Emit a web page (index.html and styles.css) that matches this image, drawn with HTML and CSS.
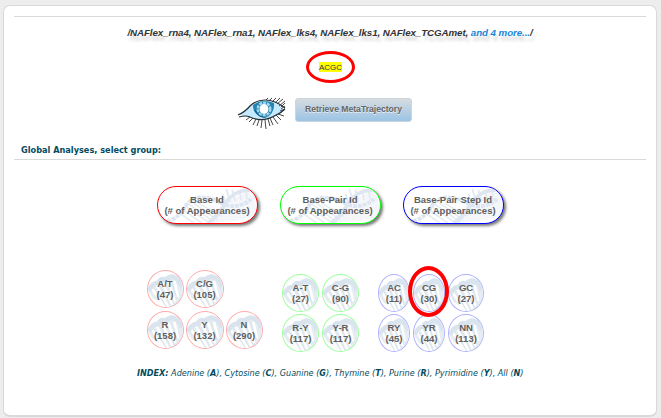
FILE: index.html
```html
<!DOCTYPE html>
<html lang="en">
<head>
<meta charset="utf-8">
<title>NAFlex Global Analyses</title>
<link rel="stylesheet" href="styles.css">
</head>
<body>
<svg class="defs" width="0" height="0" aria-hidden="true">
  <symbol id="helix-wide" viewBox="0 0 100 38" preserveAspectRatio="none">
    <path d="M47 38 C62 28 67 12 97 3 L100 30 Q75 38 47 38" fill="#f0f3f8"/>
    <path d="M27 20L52 38M31 18L57 37M36 17L60 35M41 17L64 31M24 23L44 38M21 27L36 38" stroke="#dce4e9" stroke-width="1.7"/>
    <path d="M69 2L73 16M75 3L78 15M82 3L84 14M89 4L90 13M65 7L68 17" stroke="#d9e3ee" stroke-width="2"/>
    <path d="M9 36Q21 33 26 23Q32 12 42 11Q54 11 64 17Q79 25 94 13" fill="none" stroke="#cddaea" stroke-width="4" stroke-dasharray="4 1"/>
    <path d="M51 38Q61 30 67 19Q76 3 94 3" fill="none" stroke="#d0dcec" stroke-width="4"/>
  </symbol>
  <symbol id="helix-round" viewBox="0 0 36 37" preserveAspectRatio="none">
    <path d="M21 36Q31 30 35 15L36 36Z" fill="#ccd8ed"/>
    <path d="M0 20Q5 8 14 10Q23 3 36 7L36 30L22 37L5 28Z" fill="#e6edf2"/>
    <path d="M4 18L17 37M9 15L21 37M15 12L25 35M21 11L28 32M27 10L31 27" stroke="#fff" stroke-width="2.6"/>
    <path d="M6 17L19 37M12 14L23 36M18 11L27 34M24 10L30 29" stroke="#dde6ea" stroke-width="1.2"/>
    <path d="M1 20Q5 12 11 12Q13 7 18 9Q24 4 28 7Q32 8 35 16" fill="none" stroke="#d9e4ee" stroke-width="5"/>
  </symbol>
</svg>
<main class="panel">
  <h1 class="sets"><span>/NAFlex_rna4, NAFlex_rna1, NAFlex_lks4, NAFlex_lks1, NAFlex_TCGAmet, <a>and 4 more...</a>/</span></h1>
  <div class="sequence"><div class="marker"><mark>ACGC</mark></div></div>
  <div class="retrieve">
    <svg class="eye" viewBox="0 0 48 34" aria-hidden="true">
      <path d="M1 17C11 12 15 4 27 4Q39 4 47 13Q38 21 27 23Q18 23 12 20Q7 21 1 17" fill="#c5eaff"/>
      <path d="M15 8Q24 1 36 6Q37 17 27 21Q15 19 15 8" fill="#2583b4"/>
      <path d="M17 13Q20 20 27 20" fill="none" stroke="#125b83" stroke-width="1.3"/>
      <circle cx="26" cy="12" r="6.3" fill="none" stroke="#a5d8ed" stroke-width="2.4" stroke-dasharray="3 1"/>
      <ellipse cx="26" cy="12" rx="4.5" ry="5" fill="#fff"/>
      <path d="M0 18Q7 15 12 9Q18 3 27 3Q37 3 47 11M1 20Q8 18 12 20Q25 26 38 18Q43 16 47 12" fill="none" stroke="#263035" stroke-width="1.2"/>
      <path d="M28 3L30 1M31 4L34 1M34 5L38 1M37 6L42 1M39 7L45 2M41 9L47 4M43 10L47 6M43 12L47 9M42 14L47 12M12 20L8 23M15 21L11 25M18 22L15 28M21 23L19 29M24 23L23 31M27 23L28 32M30 22L32 29M32 21L35 28M35 20L40 27M38 18L43 23M40 17L46 19" stroke="#333" stroke-width=".9"/>
    </svg>
    <button type="button">Retrieve MetaTrajectory</button>
  </div>
  <h2 class="heading"><span>Global Analyses, select group:</span></h2>
  <div class="legend">
    <div class="pill red"><svg><use href="#helix-wide"/></svg><span>Base Id<br>(# of Appearances)</span></div>
    <div class="pill green"><svg><use href="#helix-wide"/></svg><span>Base-Pair Id<br>(# of Appearances)</span></div>
    <div class="pill blue"><svg><use href="#helix-wide"/></svg><span>Base-Pair Step Id<br>(# of Appearances)</span></div>
  </div>
  <div class="groups">
    <section class="group bases">
      <div class="node"><svg><use href="#helix-round"/></svg><span>A/T<br>(47)</span></div>
      <div class="node"><svg><use href="#helix-round"/></svg><span>C/G<br>(105)</span></div>
      <div class="node first"><svg><use href="#helix-round"/></svg><span>R<br>(158)</span></div>
      <div class="node"><svg><use href="#helix-round"/></svg><span>Y<br>(132)</span></div>
      <div class="node"><svg><use href="#helix-round"/></svg><span>N<br>(290)</span></div>
    </section>
    <section class="group pairs">
      <div class="node"><svg><use href="#helix-round"/></svg><span>A-T<br>(27)</span></div>
      <div class="node"><svg><use href="#helix-round"/></svg><span>C-G<br>(90)</span></div>
      <div class="node"><svg><use href="#helix-round"/></svg><span>R-Y<br>(117)</span></div>
      <div class="node"><svg><use href="#helix-round"/></svg><span>Y-R<br>(117)</span></div>
    </section>
    <section class="group steps">
      <div class="node"><svg><use href="#helix-round"/></svg><span>AC<br>(11)</span></div>
      <div class="node selected"><svg><use href="#helix-round"/></svg><span>CG<br>(30)</span></div>
      <div class="node"><svg><use href="#helix-round"/></svg><span>GC<br>(27)</span></div>
      <div class="node"><svg><use href="#helix-round"/></svg><span>RY<br>(45)</span></div>
      <div class="node"><svg><use href="#helix-round"/></svg><span>YR<br>(44)</span></div>
      <div class="node"><svg><use href="#helix-round"/></svg><span>NN<br>(113)</span></div>
    </section>
  </div>
  <p class="index"><b>INDEX:</b> Adenine (<b>A</b>), Cytosine (<b>C</b>), Guanine (<b>G</b>), Thymine (<b>T</b>), Purine (<b>R</b>), Pyrimidine (<b>Y</b>), All (<b>N</b>)</p>
</main>
</body>
</html>
```
FILE: styles.css
```css
*, *::before, *::after { box-sizing: border-box; }
body {
  margin: 0;
  height: 418px;
  padding: 5px 4px 1px 3px;
  overflow: hidden;
  background: #ededed;
  font-family: "Liberation Sans", Arial, sans-serif;
}
.defs { position: absolute; }
.panel {
  height: 412px;
  padding: 10px 10px 0;
  background: #fff;
  border: 1px solid #d9d9d9;
  border-bottom-width: 2px;
  border-radius: 7px;
}
.sets {
  height: 35px;
  margin: 0;
  padding-top: 9px;
  border-top: 1px solid #d9d9d9;
  font-size: 9.75px;
  letter-spacing: -.08px;
  line-height: 13px;
  font-style: italic;
  text-align: center;
  white-space: nowrap;
  color: #333;
  text-shadow: 2px 5px 3px rgba(0, 0, 0, .16);
}
.sets a { color: #1685d9; }
.sequence { display: flex; height: 47px; }
.marker {
  width: 49px;
  height: 32px;
  margin-left: 292px;
  display: flex;
  align-items: center;
  justify-content: center;
  border: 3px solid #f00;
  border-radius: 50%;
}
mark { height: 10px; background: #ff0; color: #333; font-size: 8px; line-height: 11px; }
.retrieve { display: flex; height: 45px; padding-left: 224px; }
.eye { width: 48px; height: 34px; margin-right: 9px; margin-top: -1px; }
button {
  width: 117px;
  height: 24px;
  padding: 0 0 2px;
  border: 1px solid #c9d5df;
  border-radius: 3px;
  background: linear-gradient(#d6dbdf, #9bc4e5);
  color: #666;
  font: bold 8.6px/12px "Liberation Sans", Arial, sans-serif;
  white-space: nowrap;
  text-shadow: 0 1px 0 rgba(255, 255, 255, .7);
}
.heading {
  height: 17px;
  margin: 0;
  padding-left: 7px;
  border-bottom: 1px solid #d9d9d9;
  color: #034b5f;
  font: bold 9.1px/14px "DejaVu Sans Condensed", "DejaVu Sans", sans-serif;
  white-space: nowrap;
}
.legend { display: flex; gap: 22px; margin: 26px 0 0 143px; }
.pill, .node {
  position: relative;
  flex: none;
  display: flex;
  align-items: center;
  justify-content: center;
  overflow: hidden;
  text-align: center;
  font-weight: bold;
  line-height: 11px;
  color: #5f5f5f;
  white-space: nowrap;
}
.pill svg, .node svg { position: absolute; inset: 0; width: 100%; height: 100%; }
.pill svg { opacity: .7; }
.pill span, .node span { position: relative; }
.pill {
  width: 101px;
  height: 38px;
  padding-right: 1px;
  border: 1px solid;
  border-radius: 19px;
  background: #fff;
  box-shadow: 2px 2px 3px #777;
  font-size: 9.5px;
}
.red { border-color: #f00; }
.green { border-color: #0f0; }
.blue { border-color: #00f; }
.groups { display: flex; align-items: flex-start; margin: 46px 0 0 133px; }
.group { display: grid; grid-template-rows: 38px 38px; row-gap: 2px; }
.bases { grid-template-columns: 37px 38px 37px; column-gap: 2px; row-gap: 3px; }
.bases .first { grid-column: 1; }
.pairs { grid-template-columns: 37px 37px; column-gap: 3px; margin: 4px 0 0 19px; }
.steps { grid-template-columns: 32px 32px 36px; column-gap: 3px; margin: 4px 0 0 19px; }
.node { border: 1px solid #faa; border-radius: 50%; font-size: 9.5px; }
.bases .node { padding: 0 1px 1px 0; }
.pairs .node { border-color: #9f9; }
.steps .node { border-color: #b0b0ff; }
.node.selected { overflow: visible; z-index: 1; }
.selected svg { border-radius: 50%; }
.selected::after {
  content: "";
  position: absolute;
  left: -6px;
  top: -9px;
  width: 41px;
  height: 51px;
  border: 4px solid #f00;
  border-radius: 50%;
}
.index {
  margin: 15px 0 0 123px;
  color: #034b5f;
  font: italic 9px/12px "DejaVu Sans Condensed", "DejaVu Sans", sans-serif;
  white-space: nowrap;
}
```
